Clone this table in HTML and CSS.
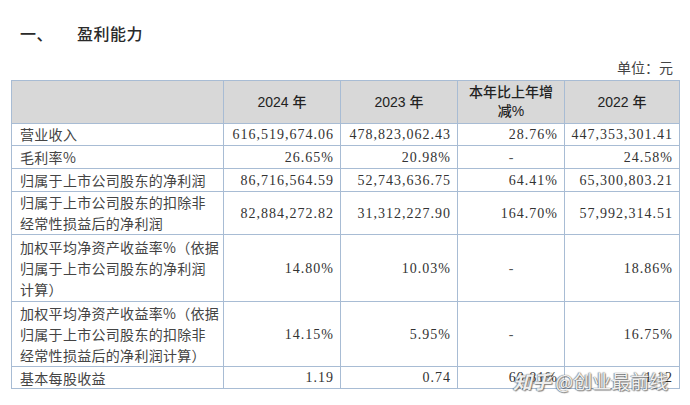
FILE: index.html
```html
<!DOCTYPE html>
<html lang="zh">
<head>
<meta charset="utf-8">
<link rel="stylesheet" href="styles.css">
</head>
<body>
<div class="page">
  <h1 class="title"><span class="num">一、</span><span>盈利能力</span></h1>
  <div class="unit">单位：元</div>
  <table class="fin">
    <colgroup>
      <col class="c1"><col class="c2"><col class="c3"><col class="c4"><col class="c5">
    </colgroup>
    <thead>
      <tr class="h">
        <th></th>
        <th>2024 年</th>
        <th>2023 年</th>
        <th>本年比上年增<br>减%</th>
        <th>2022 年</th>
      </tr>
    </thead>
    <tbody>
      <tr class="r1">
        <td class="lbl">营业收入</td>
        <td class="n">616,519,674.06</td>
        <td class="n">478,823,062.43</td>
        <td class="n">28.76%</td>
        <td class="n">447,353,301.41</td>
      </tr>
      <tr class="r2">
        <td class="lbl">毛利率%</td>
        <td class="n">26.65%</td>
        <td class="n">20.98%</td>
        <td class="d">-</td>
        <td class="n">24.58%</td>
      </tr>
      <tr class="r3">
        <td class="lbl">归属于上市公司股东的净利润</td>
        <td class="n">86,716,564.59</td>
        <td class="n">52,743,636.75</td>
        <td class="n">64.41%</td>
        <td class="n">65,300,803.21</td>
      </tr>
      <tr class="r4">
        <td class="lbl">归属于上市公司股东的扣除非<br>经常性损益后的净利润</td>
        <td class="n">82,884,272.82</td>
        <td class="n">31,312,227.90</td>
        <td class="n">164.70%</td>
        <td class="n">57,992,314.51</td>
      </tr>
      <tr class="r5">
        <td class="lbl">加权平均净资产收益率%（依据<br>归属于上市公司股东的净利润<br>计算）</td>
        <td class="n">14.80%</td>
        <td class="n">10.03%</td>
        <td class="d">-</td>
        <td class="n">18.86%</td>
      </tr>
      <tr class="r6">
        <td class="lbl">加权平均净资产收益率%（依据<br>归属于上市公司股东的扣除非<br>经常性损益后的净利润计算）</td>
        <td class="n">14.15%</td>
        <td class="n">5.95%</td>
        <td class="d">-</td>
        <td class="n">16.75%</td>
      </tr>
      <tr class="r7">
        <td class="lbl">基本每股收益</td>
        <td class="n">1.19</td>
        <td class="n">0.74</td>
        <td class="n">60.81%</td>
        <td class="n">1.12</td>
      </tr>
    </tbody>
  </table>
  <div class="wm"><span class="zh">知乎</span> @创业最前线</div>
</div>
</body>
</html>
```

FILE: styles.css
```css
* { box-sizing: border-box; }
html, body { margin: 0; padding: 0; background: #fff; }
body {
  width: 690px;
  height: 405px;
  overflow: hidden;
  font-family: "Liberation Serif", "Noto Sans CJK SC", serif;
  color: #3a3a3a;
}
.page {
  position: relative;
  height: 405px;
  padding: 22px 11px 0 11px;
}
.title {
  margin: 0 0 0 9px;
  font-family: "Noto Sans CJK SC", sans-serif;
  font-weight: 500;
  font-size: 16px;
  line-height: 22px;
  color: #2a2a2a;
  letter-spacing: 0.5px;
  display: flex;
}
.title .num { width: 57px; }
.unit {
  margin-top: 14px;
  text-align: right;
  padding-right: 6px;
  font-family: "Liberation Serif", "Noto Sans CJK SC", serif;
  font-size: 14px;
  line-height: 22px;
  height: 22px;
  color: #444;
}
.fin {
  border-collapse: collapse;
  table-layout: fixed;
  width: 668px;
  font-size: 14px;
}
.c1 { width: 212px; }
.c2 { width: 117px; }
.c3 { width: 117px; }
.c4 { width: 107px; }
.c5 { width: 115px; }
.fin th, .fin td {
  border: 1px solid #a8bcd4;
  padding: 0 6px;
  line-height: 21px;
}
.fin th {
  background: #d8d8d8;
  font-family: "Liberation Sans", "Noto Sans CJK SC", sans-serif;
  font-weight: 500;
  font-size: 14px;
  text-align: center;
  color: #222;
  height: 43px;
  line-height: 19px;
}
.fin td.lbl {
  font-family: "Noto Sans CJK SC", sans-serif;
  font-weight: 400;
  letter-spacing: 0.3px;
  text-align: left;
  padding: 0 0 0 8px;
  white-space: nowrap;
  overflow: hidden;
  color: #444;
  font-size: 14px;
}
.fin td.n {
  text-align: right;
  letter-spacing: 1px;
  padding-right: 6px;
  white-space: nowrap;
  color: #333;
}
.fin td.d {
  text-align: center;
  color: #555;
}
.r1 td { height: 22px; }
.r2 td { height: 23px; }
.r3 td { height: 23px; }
.r4 td { height: 42px; }
.r5 td { height: 67px; }
.r6 td { height: 65px; }
.r7 td { height: 22px; line-height: 20px; }
.wm {
  position: absolute;
  left: 513px;
  top: 369px;
  font-family: "Noto Sans CJK SC", sans-serif;
  font-size: 19px;
  line-height: 24px;
  color: rgba(255, 255, 255, 0.92);
  text-shadow: 0 0 1px #555, 1px 1px 1px rgba(0,0,0,0.45), -1px 0 1px rgba(0,0,0,0.3);
  white-space: nowrap;
}
.wm .zh { font-style: italic; font-weight: 700; }
```
